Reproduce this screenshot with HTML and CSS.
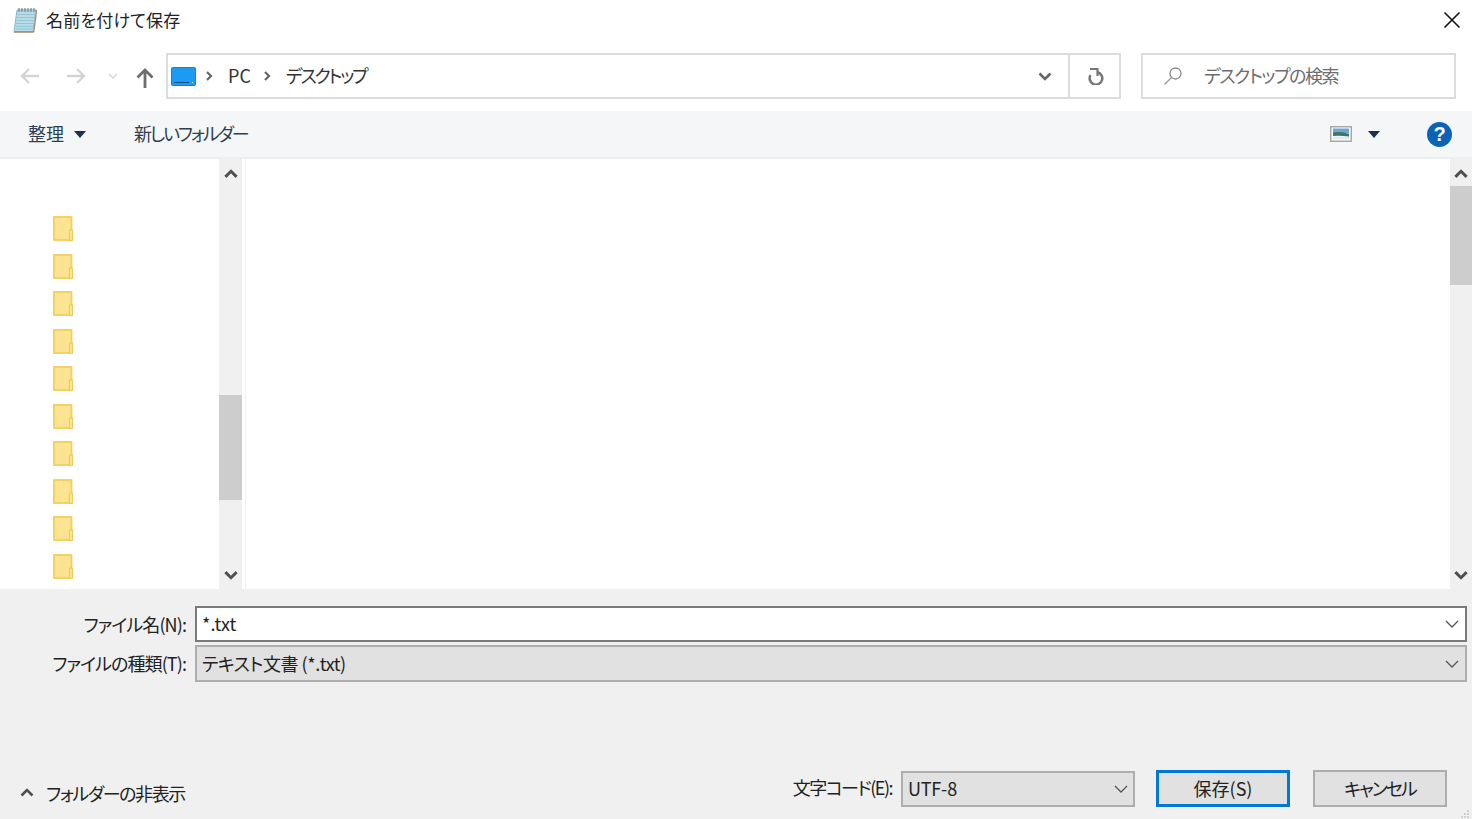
FILE: index.html
```html
<!DOCTYPE html>
<html lang="ja">
<head>
<meta charset="utf-8">
<title>名前を付けて保存</title>
<link rel="stylesheet" href="styles.css">
</head>
<body>
<div class="dialog">
  <header class="titlebar">
    <svg class="app-icon" viewBox="0 0 24 26" width="24" height="26">
      <path d="M5 3.500h18.500l-2.800 21.500" fill="none" stroke="#a58f6c" stroke-width="1.500"/>
      <path d="M4 3h18.500l-2.500 21.500H1z" fill="#b9dbe6" stroke="#8fb7c4" stroke-width="1"/>
      <path d="M1 25h19.800" stroke="#a58f6c" stroke-width="1.600"/>
      <path d="M4 7.500h17.500M3.700 10.500h17.500M3.300 13.500h17.500M3 16.500h17.500M2.700 19.500h17.500M2.300 22h17.500" stroke="#93c6d8" stroke-width="1"/>
      <path d="M6 1v4M9 1v4M12 1v4M15 1v4M18 1v4M21 1v4" stroke="#6d8794" stroke-width="1.200"/>
    </svg>
    <span class="title-text">名前を付けて保存</span>
    <svg class="close" viewBox="0 0 18 18" width="18" height="18"><path d="M1.500 1.500l15 15M16.500 1.500l-15 15" stroke="#111" stroke-width="1.600" fill="none"/></svg>
  </header>

  <nav class="navrow">
    <div class="nav-buttons">
      <svg class="nav-arrow" viewBox="0 0 20 16" width="20" height="16"><path d="M19 8H2M9 1L2 8l7 7" stroke="#d4d4d4" stroke-width="2.400" fill="none"/></svg>
      <svg class="nav-arrow" viewBox="0 0 20 16" width="20" height="16"><path d="M1 8h17M11 1l7 7-7 7" stroke="#d4d4d4" stroke-width="2.400" fill="none"/></svg>
      <svg class="nav-drop" viewBox="0 0 10 6" width="10" height="6"><path d="M1 1l4 4 4-4" stroke="#d8d8d8" stroke-width="1.600" fill="none"/></svg>
      <svg class="nav-up" viewBox="0 0 18 20" width="18" height="20"><path d="M9 20V3M1.500 9.500L9 2l7.500 7.500" stroke="#6e6e6e" stroke-width="2.800" fill="none"/></svg>
    </div>
    <div class="address">
      <svg class="pc-icon" viewBox="0 0 25 19" width="25" height="19"><rect x=".5" y=".5" width="24" height="18" rx="1" fill="#1b9cf2" stroke="#1680cc"/><path d="M3 15.500h15" stroke="#0d4f86" stroke-width="1"/><path d="M21 15.500h1" stroke="#cfe8fa" stroke-width="1"/></svg>
      <svg class="crumb-sep" viewBox="0 0 7 10" width="7" height="10"><path d="M1 1l4 4-4 4" stroke="#666" stroke-width="2.200" fill="none"/></svg>
      <span class="crumb">PC</span>
      <svg class="crumb-sep" viewBox="0 0 7 10" width="7" height="10"><path d="M1 1l4 4-4 4" stroke="#666" stroke-width="2.200" fill="none"/></svg>
      <span class="crumb crumb-desk">デスクトップ</span>
      <svg class="addr-drop" viewBox="0 0 14 9" width="14" height="9"><path d="M1.500 1.500L7 7l5.500-5.500" stroke="#666" stroke-width="2.600" fill="none"/></svg>
      <div class="refresh">
        <svg viewBox="0 0 18 18" width="18" height="18"><path d="M10.500 5.200a6.300 6.300 0 1 1-7 3" stroke="#777" stroke-width="2.500" fill="none"/><path d="M3 2h7.500v7" stroke="#777" stroke-width="2.200" fill="none"/></svg>
      </div>
    </div>
    <div class="search">
      <svg viewBox="0 0 20 20" width="20" height="20"><circle cx="12.500" cy="7.500" r="5.500" stroke="#8a8a8a" stroke-width="1.300" fill="none"/><path d="M8.500 11.500L1.500 18.500" stroke="#a89a94" stroke-width="1.500"/></svg>
      <span class="search-text">デスクトップの検索</span>
    </div>
  </nav>

  <div class="toolbar">
    <span class="tool">整理</span>
    <span class="tri"></span>
    <span class="tool new-folder">新しいフォルダー</span>
    <svg class="view-icon" viewBox="0 0 22 16" width="22" height="16"><rect x=".75" y=".75" width="20.500" height="14.500" fill="#fff" stroke="#a8a8a8" stroke-width="1.500"/><rect x="3" y="2.500" width="16" height="5" fill="#6fa6d6"/><path d="M3 6.500q8-1.500 16 1.500v3q-8-2-16-1z" fill="#3f7566"/><rect x="3" y="10.500" width="16" height="3" fill="#dfe9ee"/></svg>
    <span class="tri view-tri"></span>
    <span class="help">?</span>
  </div>

  <main class="content">
    <aside class="sidebar">
      <div class="tree">
        <svg class="folder" viewBox="0 0 20 25" width="20" height="25"><use href="#fold"/></svg>
        <svg class="folder" viewBox="0 0 20 25" width="20" height="25"><use href="#fold"/></svg>
        <svg class="folder" viewBox="0 0 20 25" width="20" height="25"><use href="#fold"/></svg>
        <svg class="folder" viewBox="0 0 20 25" width="20" height="25"><use href="#fold"/></svg>
        <svg class="folder" viewBox="0 0 20 25" width="20" height="25"><use href="#fold"/></svg>
        <svg class="folder" viewBox="0 0 20 25" width="20" height="25"><use href="#fold"/></svg>
        <svg class="folder" viewBox="0 0 20 25" width="20" height="25"><use href="#fold"/></svg>
        <svg class="folder" viewBox="0 0 20 25" width="20" height="25"><use href="#fold"/></svg>
        <svg class="folder" viewBox="0 0 20 25" width="20" height="25"><use href="#fold"/></svg>
        <svg class="folder" viewBox="0 0 20 25" width="20" height="25"><use href="#fold"/></svg>
      </div>
      <div class="scrollbar side-scroll">
        <svg class="sb-btn" viewBox="0 0 12 8"><path d="M1 7l5-5 5 5" stroke="#505050" stroke-width="2.600" fill="none"/></svg>
        <div class="sb-track"><div class="thumb side-thumb"></div></div>
        <svg class="sb-btn" viewBox="0 0 12 8"><path d="M1 1l5 5 5-5" stroke="#505050" stroke-width="2.600" fill="none"/></svg>
      </div>
    </aside>
    <section class="files"></section>
    <div class="scrollbar main-scroll">
      <svg class="sb-btn" viewBox="0 0 12 8"><path d="M1 7l5-5 5 5" stroke="#505050" stroke-width="2.600" fill="none"/></svg>
      <div class="sb-track"><div class="thumb main-thumb"></div></div>
      <svg class="sb-btn" viewBox="0 0 12 8"><path d="M1 1l5 5 5-5" stroke="#505050" stroke-width="2.600" fill="none"/></svg>
    </div>
  </main>

  <footer class="footer">
    <div class="form">
      <label class="label">ファイル名(N):</label>
      <div class="field name-field"><span>*.txt</span><svg viewBox="0 0 14 8" width="14" height="8"><path d="M1 1l6 6 6-6" stroke="#555" stroke-width="1.300" fill="none"/></svg></div>
      <label class="label">ファイルの種類(T):</label>
      <div class="field type-field"><span class="type-text">テキスト文書 (*.txt)</span><svg viewBox="0 0 14 8" width="14" height="8"><path d="M1 1l6 6 6-6" stroke="#555" stroke-width="1.300" fill="none"/></svg></div>
    </div>
    <div class="actions">
      <div class="hide-folders">
        <svg viewBox="0 0 14 9" width="14" height="9"><path d="M1.500 7.500L7 2l5.500 5.500" stroke="#505050" stroke-width="2.600" fill="none"/></svg>
        <span>フォルダーの非表示</span>
      </div>
      <span class="enc-label">文字コード(E):</span>
      <div class="field enc-field"><span class="enc-text">UTF-8</span><svg viewBox="0 0 14 8" width="14" height="8"><path d="M1 1l6 6 6-6" stroke="#555" stroke-width="1.300" fill="none"/></svg></div>
      <button class="btn primary"><span class="btn-text">保存(S)</span></button>
      <button class="btn"><span class="btn-text cancel-text">キャンセル</span></button>
    </div>
    <svg class="grip" viewBox="0 0 10 8" width="10" height="8"><path d="M7 1h2M4 4h2M7 4h2M1 7h2M4 7h2M7 7h2" stroke="#c4c4c4" stroke-width="1.500"/></svg>
  </footer>
</div>
<svg class="defs" width="0" height="0">
  <defs>
    <g id="fold">
      <rect x="1" y="1" width="17.500" height="23" fill="#fde492" stroke="#f2cf5b" stroke-width="1.800"/>
      <rect x="16.500" y="14" width="3" height="10.500" rx="1" fill="#fdeaa6" stroke="#f0cc55" stroke-width="1.300"/>
    </g>
  </defs>
</svg>
</body>
</html>
```
FILE: styles.css
```css
* { box-sizing: border-box; }
html, body { margin: 0; height: 100%; overflow: hidden; }
body {
  font-family: "Noto Sans CJK JP", "Noto Sans", sans-serif;
  font-size: 18px;
  color: #222;
  background: #fff;
  font-feature-settings: "palt";
}
.dialog { display: flex; flex-direction: column; height: 819px; width: 1472px; }
.defs { position: absolute; }

.titlebar { height: 41px; display: flex; align-items: center; padding: 0 11px 1px 13px; flex: none; }
.app-icon { margin-right: 9px; }
.title-text { font-size: 17px; letter-spacing: .2px; color: #222; flex: 1; line-height: 40px; }
.close { display: block; }

.navrow { height: 70px; display: flex; align-items: center; flex: none; padding: 0 16px 0 20px; }
.nav-buttons { width: 146px; display: flex; align-items: center; flex: none; }
.nav-arrow { margin-right: 26px; }
.nav-arrow + .nav-arrow { margin-right: 22px; }
.nav-drop { margin-right: 18px; }
.nav-up { margin-top: 4px; }
.address {
  flex: 1; height: 46px; display: flex; align-items: center;
  border: 2px solid #dcdcdc; padding-left: 3px;
}
.pc-icon { margin-right: 10px; flex: none; }
.crumb-sep { margin-right: 15px; flex: none; }
.crumb { font-size: 18px; margin-right: 13px; color: #333; position: relative; top: -1px; }
.crumb-desk { letter-spacing: -2.200px; }
.addr-drop { margin-left: auto; margin-right: 16px; }
.refresh {
  width: 51px; height: 42px; border-left: 2px solid #dcdcdc; padding-left: 2px;
  display: flex; align-items: center; justify-content: center;
}
.search {
  width: 315px; height: 46px; margin-left: 20px; flex: none;
  border: 2px solid #dcdcdc; display: flex; align-items: center; padding-left: 20px;
}
.search-text { margin-left: 21px; margin-bottom: 2px; font-size: 18px; letter-spacing: -1.450px; color: #6d6d6d; line-height: 1; }

.toolbar {
  height: 48px; background: #f5f6f7; border-bottom: 2px solid #eceef0;
  display: flex; align-items: center; padding: 0 20px 0 28px; flex: none;
}
.tool { font-size: 18px; color: #2f3f50; position: relative; top: -1px; }
.tri { width: 0; height: 0; border-left: 6px solid transparent; border-right: 6px solid transparent; border-top: 7px solid #1e2f4f; margin-left: 10px; }
.new-folder { margin-left: 48px; margin-right: auto; letter-spacing: -2.100px; }
.view-tri { margin-left: 16px; }
.help {
  width: 25px; height: 25px; border-radius: 50%; background: #0b63b8; color: #fff;
  font: bold 20px/25px "Liberation Sans", sans-serif; text-align: center; margin-left: 47px;
}

.content { height: 430px; display: flex; flex: none; }
.sidebar { width: 246px; display: flex; flex: none; border-right: 1px solid #f2f2f2; }
.tree { width: 219px; padding: 57px 0 0 53px; display: flex; flex-direction: column; gap: 12.500px; flex: none; }
.folder { display: block; flex: none; }
.scrollbar { background: #f0f0f0; width: 23px; display: flex; flex-direction: column; align-items: center; flex: none; padding: 10px 0 9px; }
.sb-btn { flex: none; width: 14px; height: 9px; }
.sb-track { flex: 1; width: 100%; position: relative; }
.thumb { background: #cdcdcd; width: 100%; position: absolute; left: 0; }
.side-thumb { top: 217px; height: 105px; }
.main-thumb { top: 8px; height: 99px; }
.files { flex: 1; background: #fff; }
.main-scroll { width: 22px; }

.footer { flex: 1; background: #f0f0f0; display: flex; flex-direction: column; position: relative; padding: 17px 5px 12px 0; }
.form { display: grid; grid-template-columns: 187px 1fr; column-gap: 8px; row-gap: 3px; }
.label { font-size: 18px; text-align: right; line-height: 36px; color: #222; letter-spacing: -.9px; padding-right: 1px; }
.field {
  height: 36px; display: flex; align-items: center; justify-content: space-between;
  padding: 0 6px 2px 5px; font-size: 18px; line-height: 1; color: #222;
}
.field svg { position: relative; top: 1px; }
.name-field { background: #fff; border: 2px solid #7a7a7a; }
.type-field { background: #e1e1e1; border: 2px solid #adadad; height: 37px; }
.type-text { letter-spacing: -.45px; }
.actions { margin-top: auto; display: flex; align-items: center; padding-right: 20px; }
.hide-folders { display: flex; align-items: center; gap: 11px; margin-left: 20px; margin-right: auto; margin-top: 8px; }
.hide-folders span { font-size: 18px; letter-spacing: -1.400px; color: #222; margin-left: 1px; }
.enc-label { font-size: 18px; letter-spacing: -1.500px; margin-right: 9px; position: relative; top: -2px; }
.enc-field { width: 234px; background: #e1e1e1; border: 2px solid #adadad; margin-right: 21px; padding-right: 5px; }
.enc-text { letter-spacing: -.2px; }
.btn {
  font: inherit; font-size: 18px; color: #222; background: #e1e1e1;
  border: 2px solid #adadad; width: 134px; height: 37px; padding: 0 0 2px; line-height: 1;
}
.btn.primary { border: 3px solid #0078d7; margin-right: 23px; }
.cancel-text { letter-spacing: -2px; }
.grip { position: absolute; right: 2px; bottom: 1px; }
```
